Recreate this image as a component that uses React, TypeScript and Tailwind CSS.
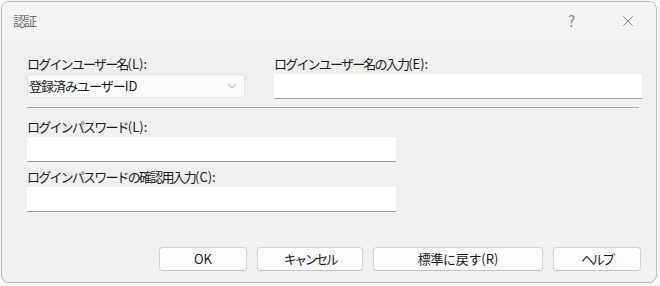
import React from 'react';
import { ChevronDown, X } from 'lucide-react';

const font = { fontFamily: '"Noto Sans CJK JP", "Noto Sans", sans-serif' };

// 和文部分だけ詰める（Meiryo UI風の幅に寄せる）
function Jp({ text, tr }: { text: string; tr: string }) {
  const i = text.search(/[(A-Z]/);
  if (i < 0) return <span className={tr}>{text}</span>;
  return (
    <>
      <span className={tr}>{text.slice(0, i)}</span>
      <span>{text.slice(i)}</span>
    </>
  );
}

function Field({ label, className }: { label: string; className: string }) {
  return (
    <div className={className}>
      <div className="text-[13px] leading-[16px] text-[#1a1a1a] mb-[2px]">
        <Jp text={label} tr="tracking-[-1.8px]" />
      </div>
      <div className="h-[25px] bg-white border-b border-[#a0a0a0]" />
    </div>
  );
}

function Btn({ children, w }: { children: React.ReactNode; w: string }) {
  return (
    <button className={`${w} shrink-0 h-[24px] bg-[#fdfdfd] border border-[#d3d3d3] border-b-[#c4c4c4] rounded-[4px] text-[13px] text-[#1a1a1a] flex items-center justify-center`}>
      {children}
    </button>
  );
}

export default function App() {
  return (
    <div className="w-[660px] h-[286px] bg-[#f7f7f7] pt-[1px] pl-[1px] overflow-hidden" style={font}>
      <div className="w-[656px] h-[282px] bg-[#f0f0f0] border border-[#b8b8b8] rounded-[8px] overflow-hidden flex flex-col">
        <div className="h-[38px] shrink-0 bg-[#f3f3f3] flex items-center pl-[11px] pr-[19px]">
          <span className="text-[13px] text-[#707070] tracking-[-2px]">認証</span>
          <span className="ml-auto text-[15px] text-[#8a8a8a] mr-[44px]">?</span>
          <X size={18} strokeWidth={1} className="text-[#6a6a6a]" />
        </div>
        <div className="flex-1 pl-[25px] pr-[14px] pt-[16px]">
          <div className="flex gap-[29px]">
            <div className="w-[218px] shrink-0">
              <div className="text-[13px] leading-[16px] text-[#1a1a1a] mb-[2px]">
                <Jp text="ログインユーザー名(L):" tr="tracking-[-1.8px]" />
              </div>
              <div className="h-[24px] bg-[#fbfbfb] border border-[#e3e3e3] rounded-[3px] flex items-center pl-[1px] pr-[5px]">
                <span className="text-[13px] text-[#1a1a1a]">
                  <Jp text="登録済みユーザーID" tr="tracking-[-1px]" />
                </span>
                <ChevronDown size={14} strokeWidth={1} className="ml-auto text-[#555]" />
              </div>
            </div>
            <Field label="ログインユーザー名の入力(E):" className="w-[368px] shrink-0" />
          </div>
          <div className="h-[2px] mt-[8px] w-[612px] border-t border-[#a9a9a9] border-b border-b-white" />
          <Field label="ログインパスワード(L):" className="w-[369px] mt-[10px]" />
          <Field label="ログインパスワードの確認用入力(C):" className="w-[369px] mt-[7px]" />
          <div className="flex gap-[10px] mt-[35px] pl-[132px]">
            <Btn w="w-[88px]">OK</Btn>
            <Btn w="w-[106px]"><span className="tracking-[-2.5px]">キャンセル</span></Btn>
            <Btn w="w-[170px]"><Jp text="標準に戻す(R)" tr="tracking-[-0.3px]" /></Btn>
            <Btn w="w-[88px]"><span className="tracking-[-2.5px]">ヘルプ</span></Btn>
          </div>
        </div>
      </div>
    </div>
  );
}
